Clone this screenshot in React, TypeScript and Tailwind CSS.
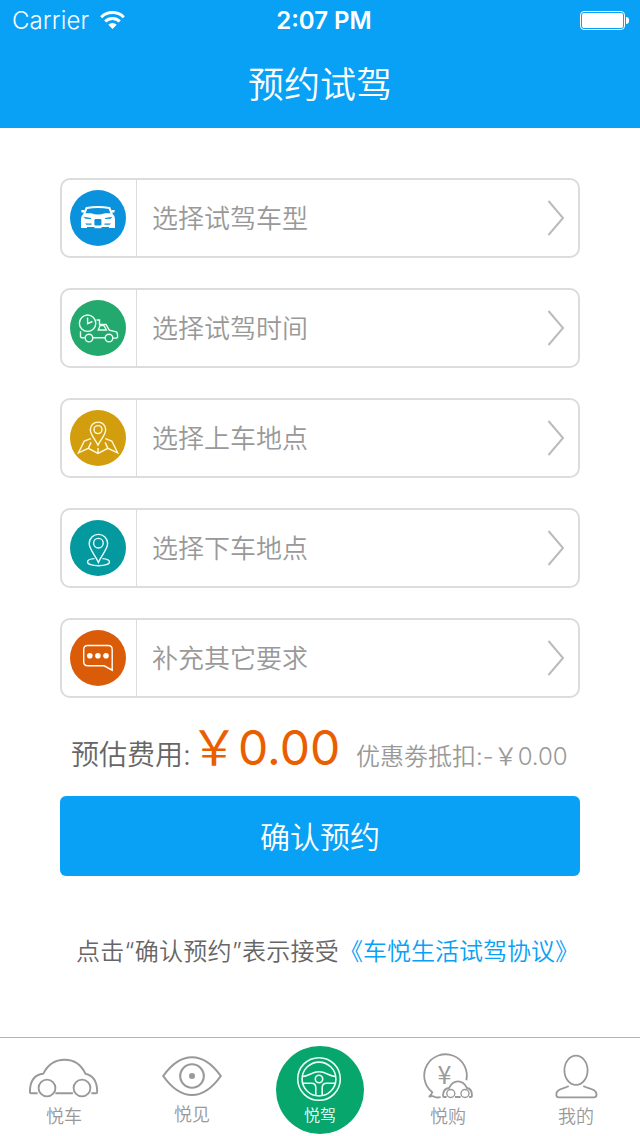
import React from 'react';

function SedanIcon() {
  return (
    <svg viewBox="0 0 56 56" className="h-14 w-14">
      <path d="M14.2 24 16.6 18Q28 16.2 39.4 18L41.8 24" fill="none" stroke="#fff" strokeWidth="2" />
      <path d="M11.2 20h3.6l-.6 2.6h-2.6zM44.8 20h-3.6l.6 2.6h2.6z" fill="#fff" />
      <path d="M14 23.2H42Q45 25.5 45 29V38H39V37H17V38H11V29Q11 25.5 14 23.2Z" fill="#fff" />
      <path d="M21 23.6q7-1.6 14 0-7 1.8-14 0z" fill="#0b92dd" />
      <rect x="24.4" y="29" width="7" height="6.6" rx="1.3" fill="#0b92dd" />
      <path d="M13.5 26.8l7.5 1.2v1.1l-5.5-.3zM42.5 26.8L35 28v1.1l5.5-.3zM15 33.6h6.5v1.2h-5zM41 33.6h-6.5v1.2h5z" fill="#0b92dd" />
      <path d="M24.5 36.8h7v1.4h-7z" fill="#fff" />
    </svg>
  );
}

function TimeIcon() {
  return (
    <svg viewBox="0 0 56 56" className="h-14 w-14" fill="none" stroke="#e9fff5" strokeWidth="1.4">
      <circle cx="17.6" cy="23.2" r="8.2" />
      <path d="M17.6 17.5v6.2l4.8-2.2" />
      <path d="M26.5 20h3v4.5H36l3.3 5.7 7 1.6q1.3.8 1.3 5.4l-1 .9h-3.5M10.5 31.2v5.6l1 1h3.3M23.2 37.7H35" />
      <path d="M28.3 30l1.7-4.4h4l2.4 4.4z" />
      <circle cx="19" cy="38" r="3.8" />
      <circle cx="39" cy="38" r="3.8" />
    </svg>
  );
}

function MapIcon() {
  return (
    <svg viewBox="0 0 56 56" className="h-14 w-14" fill="none" stroke="#fff9dd" strokeWidth="1.4">
      <circle cx="28" cy="19.6" r="4" />
      <path d="M28 35.2C25.5 30 20.3 24.5 20.3 19.8a7.7 7.7 0 0 1 15.4 0C35.7 24.5 30.5 30 28 35.2Z" />
      <path d="M20.8 28.6 14.3 31 8.5 42.8l9.8-4.4 9.7 5 9.9-5 9.7 4.4L41.8 31l-6.5-2.4M18.3 38.4l2.8-6M37.9 38.4l-2.8-6M28 38v5.4" />
    </svg>
  );
}

function PinIcon() {
  return (
    <svg viewBox="0 0 56 56" className="h-14 w-14" fill="none" stroke="#e6ffff" strokeWidth="1.4">
      <circle cx="28.4" cy="23.2" r="4.8" />
      <path d="M28.4 42.4C25.6 35.5 19.2 29.5 19.2 23.6a9.2 9.2 0 0 1 18.4 0C37.6 29.5 31.2 35.5 28.4 42.4Z" />
      <path d="M24.5 38.6c-4.3.3-7 1.6-7 3.3 0 2.1 4.6 3.8 11 3.8s11-1.7 11-3.8c0-1.7-2.8-3-7-3.3" />
    </svg>
  );
}

function ChatIcon() {
  return (
    <svg viewBox="0 0 56 56" className="h-14 w-14" fill="none" stroke="#fff" strokeWidth="1.4">
      <path d="M42.2 40.2V19.5q0-4-4-4H17.7q-4 0-4 4v12.3q0 4 4 4h16.5Z" />
      <g fill="#fff" stroke="none">
        <circle cx="19.8" cy="25.7" r="2.8" />
        <circle cx="27.9" cy="25.7" r="2.8" />
        <circle cx="36" cy="25.7" r="2.8" />
      </g>
    </svg>
  );
}

function CarTabIcon() {
  return (
    <svg viewBox="0 0 128 62" className="h-[62px] w-32" fill="none" stroke="#999" strokeWidth="1.9">
      <path d="M37.6 55.2h-6.5q-1.2 0-1.2-1.3C30 43 34.5 36.5 43.3 35.7 48 26 56 21.7 64.7 21.7S81 26 85.4 35.7C93 37.3 97.2 43 97.2 53.9q0 1.3-1.2 1.3h-4.6M55.4 55.2h17.5" />
      <circle cx="47" cy="50" r="8.4" />
      <circle cx="82" cy="50" r="8.4" />
    </svg>
  );
}

function EyeTabIcon() {
  return (
    <svg viewBox="0 0 128 62" className="h-[62px] w-32" fill="none" stroke="#999" strokeWidth="2.1">
      <path d="M35.2 38C43 27 52.5 19.2 64 19.2S85 27 92.8 38C85 49 75.5 57 64 57S43 49 35.2 38Z" />
      <circle cx="64" cy="38" r="11.8" />
      <circle cx="64" cy="38" r="3" fill="#999" stroke="none" />
    </svg>
  );
}

function WheelIcon() {
  return (
    <svg viewBox="0 0 88 58" className="h-[58px] w-[88px]" fill="none" stroke="#e8fff6" strokeWidth="1.6">
      <circle cx="43" cy="33" r="21.3" />
      <circle cx="43" cy="33" r="16.9" />
      <circle cx="43" cy="33" r="3.7" />
      <path d="M26.5 30.5C33 30 36 25.8 43 25.8S53 30 59.5 30.5M27 37.3h8.5q4.3 0 4.3 4.5v7.5M59 37.3h-8.5q-4.3 0-4.3 4.5v7.5" />
    </svg>
  );
}

function ShopTabIcon() {
  return (
    <svg viewBox="0 0 128 62" className="h-[62px] w-32" fill="none" stroke="#999" strokeWidth="1.8">
      <path d="M82.3 42.3A21.3 21.3 0 1 0 48.3 54.3Q47.5 57 44.8 59q3.7-1.7 6 0 2.5 1 5.9 0" />
      <text
        x="60.5"
        y="45.5"
        textAnchor="middle"
        fontSize="25"
        fontWeight="400"
        fill="#999"
        stroke="none"
        fontFamily="Noto Sans CJK SC"
      >
        ¥
      </text>
      <path
        d="M62.6 59h-2.3q-1.3 0-1.3-1.3 0-7 6-7.7 3.300-6.600 9-6.600t9 6.600q5 .7 5 7.700 0 1.300-1.300 1.300h-1.500M71 59h5.600"
      />
      <circle cx="66.8" cy="55.5" r="4" strokeWidth="1.4" />
      <circle cx="81" cy="55.5" r="4" strokeWidth="1.4" />
    </svg>
  );
}

function UserTabIcon() {
  return (
    <svg viewBox="0 0 128 62" className="h-[62px] w-32" fill="none" stroke="#999" strokeWidth="1.8">
      <ellipse cx="64" cy="32.3" rx="11.6" ry="14.6" />
      <path d="M56.7 48C52 50.8 44.3 50.5 44.3 56.5q0 2.9 2.5 2.9h35.2q2.5 0 2.5-2.9C84.5 50.5 76 50.8 71.3 48" />
    </svg>
  );
}

export default function App() {
  const rows = [
    { label: '选择试驾车型', color: 'bg-[#0b92dd]', icon: <SedanIcon /> },
    { label: '选择试驾时间', color: 'bg-[#23a96d]', icon: <TimeIcon /> },
    { label: '选择上车地点', color: 'bg-[#d39e0d]', icon: <MapIcon /> },
    { label: '选择下车地点', color: 'bg-[#04999f]', icon: <PinIcon /> },
    { label: '补充其它要求', color: 'bg-[#da5c09]', icon: <ChatIcon /> },
  ];

  return (
    <main className="flex h-[1136px] w-[640px] flex-col overflow-hidden whitespace-nowrap bg-white font-[Inter,'Noto_Sans_CJK_SC',sans-serif] font-[350]">
      {/* Status bar */}
      <header className="h-32 bg-[#08a1f6] text-white">
        <div className="grid h-10 grid-cols-3 items-center">
          <div className="flex items-center gap-2.5 pl-3 text-2xl">
            <span className="w-[78px] pt-0.5 tracking-[0.1px]">Carrier</span>
            <svg viewBox="0 0 25 18" className="h-[18px] w-[25px]" fill="none" stroke="#fff" strokeWidth="3">
              <path d="M1.2 6.2a16.2 16.2 0 0 1 22.6 0" />
              <path d="M5.2 10.4a10.4 10.4 0 0 1 14.6 0" />
              <path d="M12.5 18 8.3 13.7a6.2 6.2 0 0 1 8.4 0Z" fill="#fff" stroke="none" />
            </svg>
          </div>
          <div className="pl-2 pt-0.5 text-center text-2xl font-semibold">2:07 PM</div>
          <div className="flex items-center justify-end pr-[11px]">
            <div className="h-[19px] w-[45px] rounded border border-white p-px">
              <div className="h-full rounded-xs bg-white" />
            </div>
            <div className="ml-px h-[7px] w-[3px] rounded-r-full bg-white" />
          </div>
        </div>
        <h1 className="pt-[18px] text-center text-4xl leading-[54px]">预约试驾</h1>
      </header>

      {/* Booking form */}
      <section className="flex flex-col gap-[30px] px-[60px] pt-[50px]">
        {rows.map((row) => (
          <button key={row.label} className="flex h-20 items-center rounded-[10px] border-2 border-[#dcdcdc] text-left">
            <span className="flex h-full w-[75px] items-center border-r border-[#dcdcdc] pl-2">
              <span className={`h-14 w-14 rounded-full ${row.color}`}>{row.icon}</span>
            </span>
            <span className="flex-1 pl-[15px] pt-px text-[26px] text-[#999]">{row.label}</span>
            <svg viewBox="0 0 18 36" className="mr-[13px] h-9 w-[18px]" fill="none" stroke="#bbb" strokeWidth="2">
              <path d="M1.5 1 16 18 1.5 35" />
            </svg>
          </button>
        ))}
      </section>

      {/* Price */}
      <div className="flex h-[98px] items-baseline pl-[71px] pt-[21px]">
        <span className="w-[119px] text-[28px] text-[#666]">预估费用:</span>
        <span className="w-[166px] text-5xl leading-[58px] font-normal text-[#ea5e00]">￥0.00</span>
        <span className="text-2xl text-[#999]">优惠劵抵扣:-￥0.00</span>
      </div>

      <button className="mx-[60px] h-20 rounded-md bg-[#08a1f6] pt-0.5 text-[30px] text-white">确认预约</button>

      <p className="flex pl-[76px] pt-[58px] text-2xl leading-9 text-[#666]">
        <span className="w-[263px] tracking-[0.3px]">点击“确认预约”表示接受</span>
        <a className="text-[#08a1f6]">《车悦生活试驾协议》</a>
      </p>

      {/* Tab bar */}
      <nav className="mt-auto grid h-[99px] grid-cols-5 border-t border-[#b2b2b2] text-center text-lg leading-[30px] text-[#999]">
        <div>
          <CarTabIcon />
          <div className="pt-0.5">悦车</div>
        </div>
        <div>
          <EyeTabIcon />
          <div>悦见</div>
        </div>
        <div className="flex justify-center pt-2">
          <div className="h-[88px] w-[88px] rounded-full bg-[#07a66c] text-base leading-[22px] text-[#e8fff6]">
            <WheelIcon />
            <div>悦驾</div>
          </div>
        </div>
        <div>
          <ShopTabIcon />
          <div className="pt-0.5">悦购</div>
        </div>
        <div>
          <UserTabIcon />
          <div className="pt-0.5">我的</div>
        </div>
      </nav>
    </main>
  );
}
